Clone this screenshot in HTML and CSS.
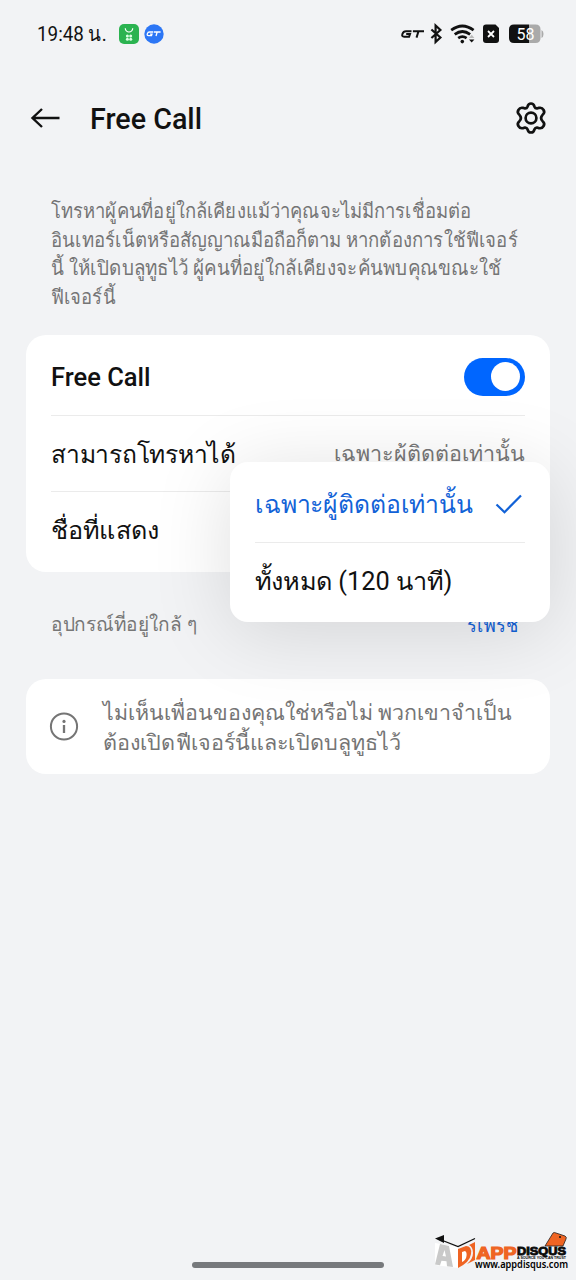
FILE: index.html
```html
<!DOCTYPE html>
<html lang="th">
<head>
<meta charset="utf-8">
<title>Free Call</title>
<link rel="stylesheet" href="styles.css">
</head>
<body>
<div class="screen">
  <header class="status">
    <span class="clock"><span>19:48 น.</span></span>
    <svg class="app-icon" width="20" height="20" viewBox="0 0 20 20"><rect width="20" height="20" rx="5" fill="#2bb350"/><path d="M6.3 4.3a3.7 3.7 0 0 0 7.4 0" fill="none" stroke="#fff" stroke-width="1.2"/><g fill="#d9ffe2"><circle cx="8.4" cy="12" r="1.5"/><circle cx="11.7" cy="12" r="1.5"/><circle cx="8.4" cy="15.2" r="1.5"/><circle cx="11.7" cy="15.2" r="1.5"/></g></svg>
    <svg class="gt-icon" width="20" height="20" viewBox="0 0 20 20"><circle cx="10" cy="10" r="9.7" fill="#2c76f5"/><path d="M9.3 8H5.500Q3.800 8 3.300 9.800t1.200 1.800h3l.5-1.500H6M10 8h6.600M13.200 8l-1.200 4" fill="none" stroke="#fff" stroke-width="1.300"/></svg>
    <svg class="status-icons" width="146" height="24" viewBox="0 0 146 24">
      <path d="M11.500 9.300H6Q3.300 9.300 2.400 12t1.800 2.800h4.900l.9-2.700H6.200M12.900 9.300H24M18.500 9.300l-2 6.300" fill="none" stroke="#111" stroke-width="2"/>
      <path d="M31.400 7.500l9 8-4.800 4.500V3.500l4.800 4.500-9 8" fill="none" stroke="#111" stroke-width="2.200"/>
      <g fill="none" stroke="#111" stroke-width="2.700"><path d="M51.200 8.200q11.200-8.400 22.400 0M54.700 12.400q7.700-5.800 15.400 0M58.200 16.200q4.200-3 8.400 0"/></g>
      <circle cx="62.300" cy="19.600" r="1.800" fill="#111"/><path d="M69 15.900l2.700-3.100 2.700 3.100z" fill="#bbb"/><path d="M69 17.500h5.400l-2.700 3z" fill="#111"/>
      <path d="M86 2.500h9.500L99 6v12a3 3 0 0 1-3 3H86a3 3 0 0 1-3-3V5.500a3 3 0 0 1 3-3z" fill="#111"/><path d="M88 9l6 6m0-6l-6 6" stroke="#fff" stroke-width="1.800"/>
      <path d="M114 2.500h15V21h-15q-5 0-5-5V7.500q0-5 5-5z" fill="#111"/><path d="M129 2.500h6.500q5 0 5 5V16q0 5-5 5H129z" fill="#aaa"/><path d="M141.500 8q2 1 2 4t-2 4z" fill="#aaa"/>
      <text x="125.600" y="17.600" class="battery-text">58</text>
    </svg>
  </header>
  <nav class="topbar">
    <svg width="30" height="24" viewBox="0 0 30 24"><path d="M12 3L2.500 12l9.500 9M2.500 12h27" fill="none" stroke="#111" stroke-width="2.400"/></svg>
    <h1>Free Call</h1>
    <svg class="gear" width="34" height="34" viewBox="-17 -17 34 34"><path d="M-3.500-11.300C-2.900-13.500-2.300-14.500 0-14.500S2.900-13.500 3.500-11.300Q4.300-9.300 6.500-9.700L8-10.100Q11-10.800 12.600-8T11.600-3.200Q8.600 0 11.600 3.200 14.200 5.200 12.600 8T8 10.100L6.500 9.700Q4.300 9.300 3.500 11.300C2.900 13.500 2.300 14.500 0 14.500S-2.900 13.500-3.500 11.300Q-4.300 9.300-6.500 9.700L-8 10.100Q-11 10.800-12.600 8T-11.600 3.200Q-8.600 0-11.600-3.200-14.200-5.200-12.600-8T-8-10.100L-6.500-9.700Q-4.300-9.300-3.500-11.300Z" fill="none" stroke="#111" stroke-width="2.700"/><circle r="5.400" fill="none" stroke="#111" stroke-width="2.700"/></svg>
  </nav>
  <p class="intro"><span class="l1">โทรหาผู้คนที่อยู่ใกล้เคียงแม้ว่าคุณจะไม่มีการเชื่อมต่อ</span><span class="l2">อินเทอร์เน็ตหรือสัญญาณมือถือก็ตาม หากต้องการใช้ฟีเจอร์</span><span class="l3">นี้ ให้เปิดบลูทูธไว้ ผู้คนที่อยู่ใกล้เคียงจะค้นพบคุณขณะใช้</span><span class="l4">ฟีเจอร์นี้</span></p>
  <main class="settings">
    <section class="card">
      <div class="row"><span class="name strong">Free Call</span><span class="switch"><i></i></span></div>
      <div class="row"><span class="name who">สามารถโทรหาได้</span><span class="value">เฉพาะผู้ติดต่อเท่านั้น</span></div>
      <div class="row"><span class="name shown">ชื่อที่แสดง</span></div>
    </section>
    <div class="menu">
      <div class="option selected"><span class="opt1">เฉพาะผู้ติดต่อเท่านั้น</span><svg width="30" height="22" viewBox="0 0 30 22"><path d="M1.500 11.500l8 7.700L26 2.500" fill="none" stroke="#1262d7" stroke-width="2.200"/></svg></div>
      <div class="option"><span class="opt2">ทั้งหมด (120 นาที)</span></div>
    </div>
  </main>
  <div class="nearby"><span class="near">อุปกรณ์ที่อยู่ใกล้ ๆ</span><span class="refresh">รีเฟรช</span></div>
  <section class="notice">
    <svg width="30" height="30" viewBox="0 0 30 30"><circle cx="15" cy="14.500" r="13.100" fill="none" stroke="#757575" stroke-width="2"/><circle cx="15" cy="9.400" r="1.600" fill="#757575"/><path d="M15 13v8" stroke="#757575" stroke-width="2.300"/></svg>
    <p><span class="n1">ไม่เห็นเพื่อนของคุณใช่หรือไม่ พวกเขาจำเป็น</span><span class="n2">ต้องเปิดฟีเจอร์นี้และเปิดบลูทูธไว้</span></p>
  </section>
  <footer class="bottom">
    <div class="handle"></div>
    <svg class="brand" width="142" height="50" viewBox="0 -4 142 50">
      <path d="M1 9l23 4v21L1 31z" fill="#fff"/>
      <path d="M6 10L15 12 19 33l-6-.7-.5-5-5-.5-1.500 4.500L1 30.500zM10.500 16L8.500 22l3.500.4z" fill="#c9c9c9" fill-rule="evenodd"/>
      <path d="M24 15l8-3q6 0 5 8t-13 14z" fill="#ef6423"/><path d="M28 18l3-1q2 1 1.500 5T28 28z" fill="#fff"/>
      <path d="M35 11l6-3v18l-8 4q6-5 6-11t-4-8z" fill="#ef6423"/>
      <path d="M1 4.500l9-3.500v8z" fill="#111"/><path d="M6 5.500l18 7 17-8" fill="none" stroke="#111" stroke-width="1.300"/>
      <path d="M119-1q1-1 3 0l9 3q2 1 1 3l-3 7h-18z" fill="#ef6423" stroke="#222" stroke-width=".8"/><circle cx="126" cy="3" r="1" fill="#111"/>
      <text x="42.500" y="24.500" class="word-app" textLength="40" lengthAdjust="spacingAndGlyphs">APP</text>
      <text x="83" y="20.700" class="word-disqus" textLength="49" lengthAdjust="spacingAndGlyphs">DISQUS</text>
      <text x="83" y="24.800" class="tagline" textLength="49" lengthAdjust="spacingAndGlyphs">A SOURCE YOU CAN TRUST</text>
      <text x="41" y="33.500" class="url" textLength="93" lengthAdjust="spacingAndGlyphs">www.appdisqus.com</text>
    </svg>
  </footer>
</div>
</body>
</html>
```
FILE: styles.css
```css
* { box-sizing: border-box; }
body { margin: 0; background: #f2f3f5; color: #111; font-family: Roboto, "DejaVu Sans"; }
.screen { width: 576px; height: 1280px; display: flex; flex-direction: column; overflow: hidden; }
.status { height: 67px; padding: 0 30px 0 37px; display: flex; align-items: center; flex: none; }
.clock { font-size: 20px; white-space: nowrap; width: 82px; }
.clock span { display: inline-block; transform: scaleX(.94); transform-origin: left; }
.gt-icon { margin-left: 5px; }
.status-icons { margin-left: auto; }
.battery-text { font-size: 16px; fill: #fff; text-anchor: middle; }
.topbar { height: 102px; padding: 0 28px 0 30px; display: flex; align-items: center; flex: none; }
.topbar h1 { margin: 2px 0 0 30px; font-size: 28.700px; font-weight: 500; }
.gear { margin-left: auto; }
.intro { margin: 28px 51px 23px; color: #757575; font-size: 20px; line-height: 28.700px; height: 115px; flex: none; }
.intro span, .notice p span { display: block; white-space: nowrap; width: max-content; transform-origin: left; }
.l1 { transform: scaleX(.923); }
.l2 { transform: scaleX(.928); }
.l3 { transform: scaleX(.941); }
.l4 { transform: scaleX(.921); }
.settings { position: relative; z-index: 1; margin: 0 26px; flex: none; }
.card { height: 237px; padding: 3px 25px; background: #fff; border-radius: 20px; }
.row { height: 76.500px; display: flex; align-items: center; justify-content: space-between; white-space: nowrap; line-height: 32px; }
.row + .row { border-top: 1px solid #ebebeb; }
.name { font-size: 25px; }
.who, .shown { padding-top: 3px; transform-origin: left; }
.who { transform: scaleX(.984); }
.shown { transform: scaleX(1.01); }
.strong { font-weight: 500; font-size: 25.500px; padding-top: 2px; }
.value { font-size: 21.500px; color: #777; padding-top: 1px; }
.switch { width: 61px; height: 38px; margin-top: 1px; border-radius: 20px; background: #0066ff; display: flex; justify-content: flex-end; align-items: center; padding: 5px; }
.switch i { width: 29px; height: 29px; border-radius: 50%; background: #fff; }
.menu { position: absolute; right: 0; top: 127px; width: 320px; height: 160px; padding: 3px 25px; background: #fff; border-radius: 18px; box-shadow: 0 9px 80px rgba(0, 0, 0, .13); }
.option { height: 76.500px; font-size: 25px; line-height: 32px; display: flex; align-items: center; justify-content: space-between; white-space: nowrap; }
.option + .option { border-top: 1px solid #ebebeb; }
.option span { padding-top: 4px; transform-origin: left; }
.option svg { margin-top: 2px; }
.opt1 { transform: scaleX(.99); }
.opt2 { transform: scaleX(1.013); }
.selected { color: #1262d7; }
.nearby { height: 107px; padding: 0 58px 2px 51px; display: flex; align-items: center; justify-content: space-between; color: #777; font-size: 19.500px; line-height: 26px; flex: none; }
.near { transform: scaleX(.977); transform-origin: left; }
.refresh { color: #1262d7; padding-top: 3px; transform: scaleX(.94); transform-origin: right; }
.notice { height: 95px; margin: 0 26px; padding: 0 23px; display: flex; align-items: center; gap: 24px; background: #fff; border-radius: 20px; flex: none; }
.notice p { margin: 2px 0 0; font-size: 21.400px; line-height: 30px; color: #757575; }
.n2 { transform: scaleX(1.008); }
.bottom { margin-top: auto; height: 50px; display: flex; align-items: flex-start; padding-left: 192px; }
.handle { width: 192px; height: 6px; margin-top: 32px; border-radius: 3px; background: #77797c; }
.brand { margin-left: 50px; font-family: "Liberation Sans", sans-serif; flex: none; }
.word-app { font-size: 16px; font-weight: 700; fill: #ef6423; stroke: #ef6423; stroke-width: 1.200px; }
.word-disqus { font-size: 11px; font-weight: 700; stroke: #111; stroke-width: .9px; }
.tagline { font-size: 3.500px; font-weight: 700; }
.url { font-family: "Noto Sans", sans-serif; font-size: 10.500px; font-weight: 600; }
```
